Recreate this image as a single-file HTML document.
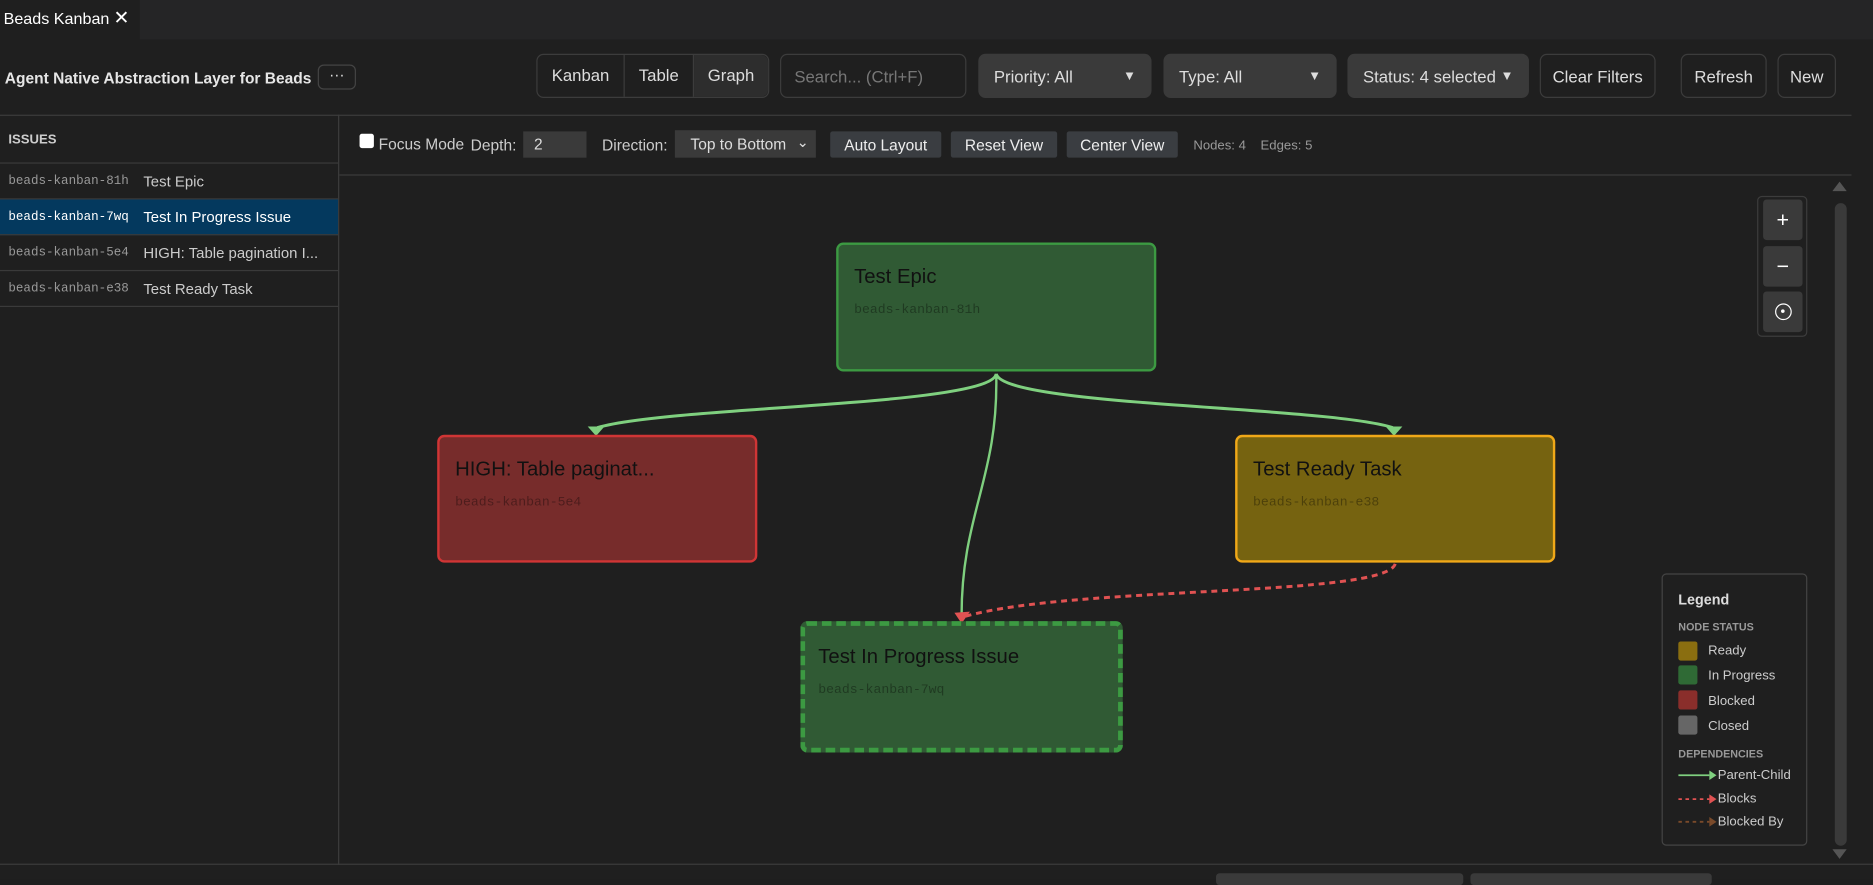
<!DOCTYPE html>
<html><head><meta charset="utf-8"><style>
*{box-sizing:border-box;margin:0;padding:0}
html,body{width:1873px;height:879px;overflow:hidden;background:#1f1f1f;font-family:"Liberation Sans",sans-serif;color:#ccc}
#w{position:absolute;left:0;top:0;width:1568px;height:736px;transform:scale(1.19452);transform-origin:0 0;background:#1f1f1f}
.a{position:absolute}
.btn{position:absolute;top:45px;height:37px;border:1px solid #3c3c3c;border-radius:6px;color:#ddd;font-size:14px;display:flex;align-items:center;justify-content:center}
.sel{background:#3a3a3a;border-color:#3a3a3a;justify-content:space-between;padding:0 12px}
.row{position:absolute;left:0;width:283px;height:30px;border-bottom:1px solid #3a3a3a;font-size:12.5px;display:flex;align-items:center}
.row .id{font-family:"Liberation Mono",monospace;font-size:10.5px;color:#999;width:120px;padding-left:7px}
.row .t{color:#ccc}
.tb{position:absolute;top:110px;height:22px;background:#3a3d41;color:#eee;font-size:13px;display:flex;align-items:center;justify-content:center;border-radius:2px}
.node{position:absolute;border-radius:6px;border:2px solid}
.node .h{position:absolute;left:13px;top:17px;font-size:17px;color:#111}
.node .i{position:absolute;left:13px;top:49px;font-family:"Liberation Mono",monospace;font-size:11px;color:rgba(0,0,0,.35)}
.zb{position:absolute;left:1476px;width:33px;height:34px;background:#3a3a3a;border-radius:3px;color:#fff;font-size:18px;display:flex;align-items:center;justify-content:center}
.lg{position:absolute;left:1405px;font-size:11px;color:#ccc}
.sw{position:absolute;left:1405px;width:16px;height:16px;border-radius:2px}
</style></head><body><div id="w">
<div class="a" style="left:0;top:0;width:1568px;height:33px;background:#252526"></div>
<div class="a" style="left:0;top:0;width:117px;height:33px;background:#1f1f1f;font-size:13.5px;color:#fff;padding:8px 0 0 3px">Beads Kanban <span style="position:absolute;left:95px;top:5px;font-size:16px">✕</span></div>
<div class="a" style="left:4px;top:58px;font-size:13px;font-weight:bold;color:#e6e6e6">Agent Native Abstraction Layer for Beads</div>
<div class="a" style="left:266px;top:54px;width:32px;height:21px;border:1px solid #444;border-radius:5px;color:#ddd;font-size:13px;text-align:center;line-height:16px">···</div>
<div class="btn" style="left:449px;width:195px;justify-content:flex-start">
 <span style="width:73px;text-align:center;border-right:1px solid #3c3c3c;line-height:35px">Kanban</span><span style="width:58px;text-align:center;border-right:1px solid #3c3c3c;line-height:35px">Table</span><span style="width:62px;text-align:center;background:#2d2d2d;line-height:35px;border-radius:0 6px 6px 0">Graph</span></div>
<div class="btn" style="left:653px;width:156px;justify-content:flex-start;padding-left:11px;color:#777">Search... (Ctrl+F)</div>
<div class="btn sel" style="left:819px;width:145px"><span>Priority: All</span><span style="font-size:11px">▼</span></div>
<div class="btn sel" style="left:974px;width:145px"><span>Type: All</span><span style="font-size:11px">▼</span></div>
<div class="btn sel" style="left:1128px;width:152px"><span>Status: 4 selected</span><span style="font-size:11px">▼</span></div>
<div class="btn" style="left:1289px;width:97px">Clear Filters</div>
<div class="btn" style="left:1407px;width:72px">Refresh</div>
<div class="btn" style="left:1488px;width:49px">New</div>
<div class="a" style="left:0;top:96px;width:1550px;height:1px;background:#3c3c3c"></div>
<div class="a" style="left:283px;top:96px;width:1px;height:628px;background:#3c3c3c"></div>
<div class="a" style="left:7px;top:111px;font-size:11px;font-weight:bold;color:#ccc">ISSUES</div>
<div class="a" style="left:0;top:136px;width:283px;height:1px;background:#3a3a3a"></div>
<div class="row" style="top:137px"><span class="id">beads-kanban-81h</span><span class="t">Test Epic</span></div>
<div class="row" style="top:167px;background:#04395e"><span class="id" style="color:#fff">beads-kanban-7wq</span><span class="t" style="color:#fff">Test In Progress Issue</span></div>
<div class="row" style="top:197px"><span class="id">beads-kanban-5e4</span><span class="t">HIGH: Table pagination I...</span></div>
<div class="row" style="top:227px"><span class="id">beads-kanban-e38</span><span class="t">Test Ready Task</span></div>
<div class="a" style="left:284px;top:146px;width:1266px;height:1px;background:#3c3c3c"></div>
<div class="a" style="left:301px;top:112px;width:12px;height:12px;background:#fff;border-radius:2px"></div>
<div class="a" style="left:317px;top:113px;font-size:13px">Focus Mode</div>
<div class="a" style="left:394px;top:114px;font-size:13px">Depth:</div>
<div class="a" style="left:438px;top:110px;width:53px;height:22px;background:#3a3a3a;font-size:13px;padding:3px 9px;color:#ddd">2</div>
<div class="a" style="left:504px;top:114px;font-size:13px">Direction:</div>
<div class="a" style="left:565px;top:109px;width:118px;height:23px;background:#3a3a3a;font-size:13px;padding:4px 13px;color:#ddd">Top to Bottom<span style="position:absolute;right:6px;top:3px;font-size:12px">⌄</span></div>
<div class="tb" style="left:695px;width:93px">Auto Layout</div>
<div class="tb" style="left:796px;width:89px">Reset View</div>
<div class="tb" style="left:893px;width:93px">Center View</div>
<div class="a" style="left:999px;top:116px;font-size:11px;color:#999">Nodes: 4 &nbsp;&nbsp; Edges: 5</div>
<svg class="a" style="left:0;top:0" width="1568" height="736">
 <g fill="none" stroke="#7fd07f" stroke-width="2.5">
  <path d="M834 313 C830 340 560 340 500 358"/>
  <path d="M834 313 C840 340 1110 340 1166 358"/>
  <path d="M834 313 C836 400 805 430 805 515" stroke-width="2"/>
 </g>
 <path d="M492 357 L506 357 L499 365Z M1160 357 L1174 357 L1167 365Z" fill="#7fd07f"/>
 <path d="M1168 472 C1160 500 900 490 808 516" fill="none" stroke="#e05252" stroke-width="2.5" stroke-dasharray="5 4"/>
 <path d="M799 513 L812 512 L805 522Z" fill="#e05252"/>
 <path d="M1540 152 L1546 160 L1534 160Z M1534 711 L1546 711 L1540 719Z" fill="#555"/>
 <rect x="1536" y="170" width="10" height="538" rx="5" fill="#3a3a3a"/>
</svg>
<div class="node" style="left:700px;top:203px;width:268px;height:108px;background:#305a34;border-color:#3c9a42"><div class="h">Test Epic</div><div class="i">beads-kanban-81h</div></div>
<div class="node" style="left:366px;top:364px;width:268px;height:107px;background:#772c2b;border-color:#d03535"><div class="h">HIGH: Table paginat...</div><div class="i">beads-kanban-5e4</div></div>
<div class="node" style="left:1034px;top:364px;width:268px;height:107px;background:#766310;border-color:#f0a818"><div class="h">Test Ready Task</div><div class="i">beads-kanban-e38</div></div>
<div class="node" style="left:670px;top:520px;width:270px;height:110px;background:#305a34;border:4px dashed #3c9a42"><div class="h" style="left:11px;top:16px">Test In Progress Issue</div><div class="i" style="left:11px;top:48px">beads-kanban-7wq</div></div>
<div class="a" style="left:1471px;top:164px;width:42px;height:118px;border:1px solid #3c3c3c;border-radius:4px;background:#1f1f1f"></div>
<div class="zb" style="top:167px">+</div>
<div class="zb" style="top:206px">−</div>
<div class="zb" style="top:244px"><span style="display:block;width:14px;height:14px;border:1.5px solid #fff;border-radius:50%;position:relative"><span style="position:absolute;left:4px;top:4px;width:3px;height:3px;background:#fff;border-radius:50%"></span></span></div>
<div class="a" style="left:1391px;top:480px;width:122px;height:228px;border:1px solid #444;border-radius:4px;background:#1f1f1f"></div>
<div class="lg" style="top:495px;font-size:12px;font-weight:bold;color:#ddd">Legend</div>
<div class="lg" style="top:520px;font-size:9px;font-weight:bold;color:#999">NODE STATUS</div>
<div class="sw" style="top:537px;background:#8a6e10"></div><div class="lg" style="left:1430px;top:539px">Ready</div>
<div class="sw" style="top:557px;background:#2f6a35"></div><div class="lg" style="left:1430px;top:560px">In Progress</div>
<div class="sw" style="top:578px;background:#8a2e2b"></div><div class="lg" style="left:1430px;top:581px">Blocked</div>
<div class="sw" style="top:599px;background:#666"></div><div class="lg" style="left:1430px;top:602px">Closed</div>
<div class="lg" style="top:626px;font-size:9px;font-weight:bold;color:#999">DEPENDENCIES</div>
<svg class="a" style="left:1405px;top:642px" width="34" height="52"><path d="M0 7H26" stroke="#7fd07f" stroke-width="1.5"/><path d="M26 3L32 7L26 11Z" fill="#7fd07f"/><path d="M0 27H26" stroke="#e05252" stroke-width="1.5" stroke-dasharray="3 3"/><path d="M26 23L32 27L26 31Z" fill="#e05252"/><path d="M0 46H26" stroke="#7a4a2a" stroke-width="1.5" stroke-dasharray="3 3"/><path d="M26 42L32 46L26 50Z" fill="#7a4a2a"/></svg>
<div class="lg" style="left:1438px;top:643px">Parent-Child</div>
<div class="lg" style="left:1438px;top:663px">Blocks</div>
<div class="lg" style="left:1438px;top:682px">Blocked By</div>
<div class="a" style="left:0;top:723px;width:1568px;height:1px;background:#3c3c3c"></div>
<div class="a" style="left:1018px;top:731px;width:207px;height:10px;background:#3a3a3a;border-radius:3px"></div>
<div class="a" style="left:1231px;top:731px;width:202px;height:10px;background:#3a3a3a;border-radius:3px"></div>
</div></body></html>
